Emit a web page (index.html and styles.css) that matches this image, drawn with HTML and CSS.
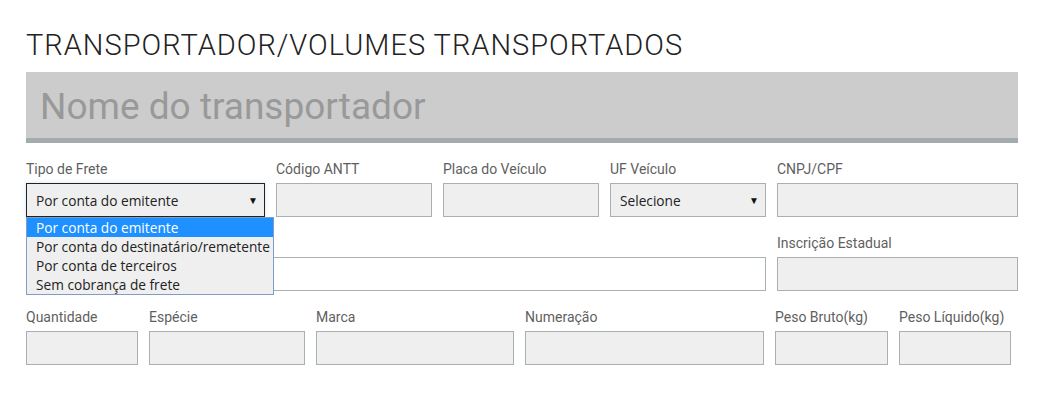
FILE: index.html
```html
<!DOCTYPE html>
<html lang="pt">
<head>
<meta charset="utf-8">
<link rel="stylesheet" href="styles.css">
</head>
<body>
<div class="page">
  <h1 class="title">TRANSPORTADOR/VOLUMES TRANSPORTADOS</h1>
  <div class="namebar">Nome do transportador</div>

  <div class="row first">
    <div class="field c3a">
      <label class="lbl">Tipo de Frete</label>
      <div class="select focused">
        <span>Por conta do emitente</span><span class="arrow">▼</span>
        <ul class="list">
          <li class="active">Por conta do emitente</li>
          <li>Por conta do destinatário/remetente</li>
          <li>Por conta de terceiros</li>
          <li>Sem cobrança de frete</li>
        </ul>
      </div>
    </div>
    <div class="field c2">
      <label class="lbl">Código ANTT</label>
      <div class="input"></div>
    </div>
    <div class="field c2">
      <label class="lbl">Placa do Veículo</label>
      <div class="input"></div>
    </div>
    <div class="field c2">
      <label class="lbl">UF Veículo</label>
      <div class="select"><span>Selecione</span><span class="arrow">▼</span></div>
    </div>
    <div class="field c3b">
      <label class="lbl">CNPJ/CPF</label>
      <div class="input"></div>
    </div>
  </div>

  <div class="row second">
    <div class="field c9">
      <label class="lbl hidden">Endereço</label>
      <div class="input white"></div>
    </div>
    <div class="field c3b">
      <label class="lbl">Inscrição Estadual</label>
      <div class="input"></div>
    </div>
  </div>

  <div class="row third">
    <div class="field w112">
      <label class="lbl">Quantidade</label>
      <div class="input"></div>
    </div>
    <div class="field w156">
      <label class="lbl">Espécie</label>
      <div class="input"></div>
    </div>
    <div class="field w198">
      <label class="lbl">Marca</label>
      <div class="input"></div>
    </div>
    <div class="field w239">
      <label class="lbl">Numeração</label>
      <div class="input"></div>
    </div>
    <div class="field w113">
      <label class="lbl">Peso Bruto(kg)</label>
      <div class="input"></div>
    </div>
    <div class="field w112">
      <label class="lbl">Peso Líquido(kg)</label>
      <div class="input"></div>
    </div>
  </div>
</div>
</body>
</html>
```
FILE: styles.css
```css
* { box-sizing: border-box; }
html, body { margin: 0; padding: 0; background: #fff; }
body { font-family: "Roboto", "Liberation Sans", sans-serif; color: #333; }
.page { width: 992px; margin-left: 26px; padding-top: 28px; }
.title {
  margin: 0;
  font-weight: 300;
  font-size: 29px;
  line-height: 34px;
  color: #222;
  letter-spacing: 1px;
  height: 44px;
  white-space: nowrap;
}
.namebar {
  height: 71px;
  background: #cccccc;
  border-bottom: 5px solid #a3abae;
  color: #999;
  font-family: "Roboto", sans-serif;
  font-size: 37px;
  line-height: 70px;
  padding-left: 14px;
}
.row { display: flex; gap: 11px; }
.row.first { margin-top: 18px; }
.row.second { margin-top: 18px; }
.row.third { margin-top: 18px; }
.field { display: flex; flex-direction: column; }
.c2 { width: 156px; }
.c3a { width: 239px; }
.c3b { width: 241px; }
.c9 { width: 740px; }
.w112 { width: 112px; }
.w113 { width: 113px; }
.w156 { width: 156px; }
.w198 { width: 198px; }
.w239 { width: 239px; }
.lbl {
  font-size: 14px;
  line-height: 16px;
  color: #5f5f5f;
  height: 22px;
  display: block;
  white-space: nowrap;
}
.lbl.hidden { visibility: hidden; }
.input {
  height: 34px;
  background: #efefef;
  border: 1px solid #a9b0b3;
}
.input.white { background: #fff; }
.select {
  position: relative;
  height: 34px;
  background: #efefef;
  border: 1px solid #a9b0b3;
  display: flex;
  align-items: center;
  justify-content: space-between;
  padding: 0 6px 0 9px;
  font-family: "Open Sans", "Noto Sans", sans-serif;
  font-size: 13.7px;
  color: #222;
}
.select.focused {
  border-color: #222;
  box-shadow: 0 0 4px rgba(120, 170, 230, 0.35);
}
.arrow { font-size: 10px; color: #111; }
.list {
  position: absolute;
  left: -1px;
  top: 33px;
  width: 248px;
  margin: 0;
  padding: 0;
  list-style: none;
  background: #efefef;
  border: 1px solid #7f9dc9;
  z-index: 5;
}
.list li {
  height: 19px;
  line-height: 19px;
  padding-left: 9px;
  font-size: 13.7px;
  color: #222;
  white-space: nowrap;
}
.list li.active { background: #1e90ff; color: #fff; }
```
